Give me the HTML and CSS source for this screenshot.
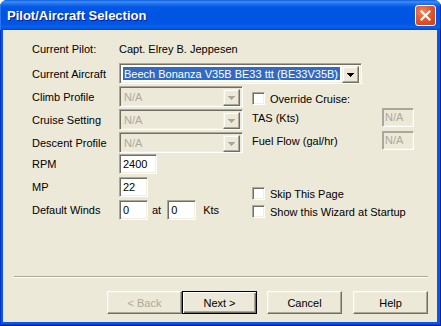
FILE: index.html
```html
<!DOCTYPE html>
<html>
<head>
<meta charset="utf-8">
<link rel="stylesheet" href="styles.css">
</head>
<body>
<div class="window">
  <div class="titlebar">
    <span class="title">Pilot/Aircraft Selection</span>
    <div class="close">
      <svg width="11" height="11" viewBox="0 0 11 11"><path d="M1.5 1.5L9.5 9.5M9.5 1.5L1.5 9.5" stroke="#fff" stroke-width="2.2" stroke-linecap="square"/></svg>
    </div>
  </div>
  <div class="frame">
    <div class="client">
      <div class="form">
        <div class="row pilot"><span class="lbl">Current Pilot:</span><span>Capt. Elrey B. Jeppesen</span></div>
        <div class="row"><span class="lbl">Current Aircraft</span>
          <div class="combo wide">
            <div class="combo-text sel">Beech Bonanza V35B BE33 ttt (BE33V35B)</div>
            <div class="drop"><svg width="7" height="4" viewBox="0 0 7 4"><path d="M0 0h7v1h-1v1h-1v1h-1v1h-1v-1h-1v-1h-1v-1h-1z" fill="#000"/></svg></div>
          </div>
        </div>
        <div class="split">
          <div class="left">
            <div class="row"><span class="lbl">Climb Profile</span>
              <div class="combo off"><div class="combo-text">N/A</div><div class="drop"><svg width="7" height="4" viewBox="0 0 7 4"><path d="M0 0h7v1h-1v1h-1v1h-1v1h-1v-1h-1v-1h-1v-1h-1z" fill="#ACA899"/></svg></div></div>
            </div>
            <div class="row"><span class="lbl">Cruise Setting</span>
              <div class="combo off"><div class="combo-text">N/A</div><div class="drop"><svg width="7" height="4" viewBox="0 0 7 4"><path d="M0 0h7v1h-1v1h-1v1h-1v1h-1v-1h-1v-1h-1v-1h-1z" fill="#ACA899"/></svg></div></div>
            </div>
            <div class="row"><span class="lbl">Descent Profile</span>
              <div class="combo off"><div class="combo-text">N/A</div><div class="drop"><svg width="7" height="4" viewBox="0 0 7 4"><path d="M0 0h7v1h-1v1h-1v1h-1v1h-1v-1h-1v-1h-1v-1h-1z" fill="#ACA899"/></svg></div></div>
            </div>
            <div class="erow"><span class="lbl">RPM</span><div class="edit w38">2400</div></div>
            <div class="erow"><span class="lbl">MP</span><div class="edit w29">22</div></div>
            <div class="erow"><span class="lbl">Default Winds</span><div class="edit w29">0</div><span class="at">at</span><div class="edit w29">0</div><span class="kts">Kts</span></div>
          </div>
          <div class="right">
            <div class="chk-row override"><span class="chk"></span><span>Override Cruise:</span></div>
            <div class="val-row tas"><span class="vlbl">TAS (Kts)</span><div class="edit dis">N/A</div></div>
            <div class="val-row fuel"><span class="vlbl">Fuel Flow (gal/hr)</span><div class="edit dis">N/A</div></div>
            <div class="chk-row skip"><span class="chk"></span><span>Skip This Page</span></div>
            <div class="chk-row show"><span class="chk"></span><span>Show this Wizard at Startup</span></div>
          </div>
        </div>
      </div>
      <div class="footer">
        <div class="sep"></div>
        <div class="buttons">
          <div class="btn disabled">&lt; Back</div>
          <div class="btn default">Next &gt;</div>
          <div class="btn gap">Cancel</div>
          <div class="btn gap2">Help</div>
        </div>
      </div>
    </div>
  </div>
</div>
</body>
</html>
```
FILE: styles.css
```css
html, body {
  margin: 0;
  padding: 0;
  background: #ffffff;
}
body {
  font: 11px "Liberation Sans", Arial, sans-serif;
  color: #000;
}
.window {
  width: 441px;
  height: 326px;
  display: flex;
  flex-direction: column;
  background: #0855DD;
  border-radius: 7px 7px 0 0;
  overflow: hidden;
}
.titlebar {
  height: 30px;
  flex: none;
  box-sizing: border-box;
  display: flex;
  align-items: center;
  padding: 0 5px 0 7px;
  background: linear-gradient(#0A5BDA 0%, #3D8EF7 6%, #1E6DEB 14%, #0058E6 24%, #0054E2 55%, #0056E6 80%, #0A61EE 90%, #0052E0 96%, #0046CF 100%);
  box-shadow: inset 1px 0 0 #2C74F0, inset -1px 0 0 #0033BB;
}
.title {
  flex: 1;
  color: #fff;
  font: bold 13px "Liberation Sans", Arial, sans-serif;
  text-shadow: 1px 1px 0 #0A1A8A;
  margin-top: 1px;
}
.close {
  width: 21px;
  height: 21px;
  box-sizing: border-box;
  border: 1px solid #fff;
  border-radius: 3px;
  background: radial-gradient(circle at 35% 30%, #EE8A66 0%, #E0582F 45%, #C8401C 100%);
  display: flex;
  align-items: center;
  justify-content: center;
  margin-top: 1px;
}
.frame {
  flex: 1;
  display: flex;
  padding: 0 4px 4px 3px;
  background: #0A58E2;
  box-shadow: inset 1px 0 0 #0033C8, inset -1px 0 0 #00249E, inset 0 -1px 0 #001A8C, inset 0 -2px 0 #0040CC;
}
.client {
  flex: 1;
  background: #ECE9D8;
  display: flex;
  flex-direction: column;
}
.form {
  flex: 1;
  padding: 11px 0 0 29px;
}
.row {
  display: flex;
  align-items: center;
  height: 23px;
}
.pilot {
  height: 16px;
  margin-bottom: 5px;
}
.lbl {
  width: 87px;
  flex: none;
  white-space: nowrap;
}
.split {
  display: flex;
}
.left {
  width: 220px;
  flex: none;
}
.combo {
  box-sizing: border-box;
  height: 21px;
  width: 124px;
  border: 1px solid;
  border-color: #ACA899 #fff #fff #ACA899;
  box-shadow: inset 1px 1px 0 #716F64, inset -1px -1px 0 #F1EFE2;
  background: #fff;
  display: flex;
  padding: 2px 2px 2px 2px;
}
.combo.wide {
  width: 243px;
}
.combo.off {
  background: #ECE9D8;
  color: #ACA899;
}
.combo-text {
  flex: 1;
  line-height: 15px;
  padding-left: 2px;
  margin: 1px 2px 1px 0;
  white-space: nowrap;
  overflow: hidden;
}
.combo-text.sel {
  background: #316AC5;
  color: #fff;
  padding-left: 1px;
  margin-left: 1px;
}
.drop {
  box-sizing: border-box;
  width: 17px;
  height: 17px;
  flex: none;
  background: #ECE9D8;
  border: 1px solid;
  border-color: #F1EFE2 #716F64 #716F64 #F1EFE2;
  box-shadow: inset -1px -1px 0 #ACA899, inset 1px 1px 0 #fff;
  display: flex;
  align-items: center;
  justify-content: center;
}
.drop svg {
  display: block;
  shape-rendering: crispEdges;
}
.erow {
  display: flex;
  align-items: center;
  height: 20px;
  margin-bottom: 3px;
}
.edit {
  box-sizing: border-box;
  height: 20px;
  border: 1px solid;
  border-color: #ACA899 #fff #fff #ACA899;
  box-shadow: inset 1px 1px 0 #716F64, inset -1px -1px 0 #F1EFE2;
  background: #fff;
  padding: 0 0 0 3px;
  line-height: 18px;
  white-space: nowrap;
}
.w38 { width: 38px; }
.w29 { width: 29px; }
.at { margin: 0 6px 0 4px; }
.kts { margin-left: 7px; }
.edit.dis {
  width: 32px;
  height: 19px;
  background: #ECE9D8;
  color: #ACA899;
  padding-left: 2px;
  line-height: 17px;
  border-color: #ACA899 #fff #fff #ACA899;
  box-shadow: inset 1px 1px 0 #ACA899, inset -1px -1px 0 #F1EFE2;
}
.right {
  display: flex;
  flex-direction: column;
  width: 176px;
}
.chk-row {
  display: flex;
  align-items: center;
  height: 13px;
  white-space: nowrap;
}
.chk {
  box-sizing: border-box;
  width: 13px;
  height: 13px;
  flex: none;
  margin-right: 5px;
  border: 1px solid;
  border-color: #ACA899 #fff #fff #ACA899;
  box-shadow: inset 1px 1px 0 #716F64, inset -1px -1px 0 #F1EFE2;
  background: #fff;
}
.override { margin-top: 7px; }
.val-row {
  display: flex;
  align-items: center;
  height: 19px;
}
.tas { margin-top: 3px; }
.fuel { margin-top: 4px; }
.skip { margin-top: 37px; }
.show { margin-top: 5px; }
.vlbl {
  width: 130px;
  flex: none;
  white-space: nowrap;
}
.footer {
  flex: none;
  padding: 0 9px 8px 11px;
}
.sep {
  border-top: 1px solid #ACA899;
  border-bottom: 1px solid #fff;
}
.buttons {
  display: flex;
  justify-content: flex-end;
  margin-top: 13px;
}
.btn {
  box-sizing: border-box;
  width: 75px;
  height: 23px;
  display: flex;
  align-items: center;
  justify-content: center;
  background: #ECE9D8;
  border: 1px solid;
  border-color: #fff #716F64 #716F64 #fff;
  box-shadow: inset -1px -1px 0 #ACA899, inset 1px 1px 0 #F1EFE2;
}
.btn.disabled {
  color: #ACA899;
}
.btn.default {
  border: 1px solid #000;
  box-shadow: inset 1px 1px 0 #fff, inset -1px -1px 0 #716F64, inset -2px -2px 0 #ACA899;
}
.btn.gap { margin-left: 10px; }
.btn.gap2 { margin-left: 11px; }
```
